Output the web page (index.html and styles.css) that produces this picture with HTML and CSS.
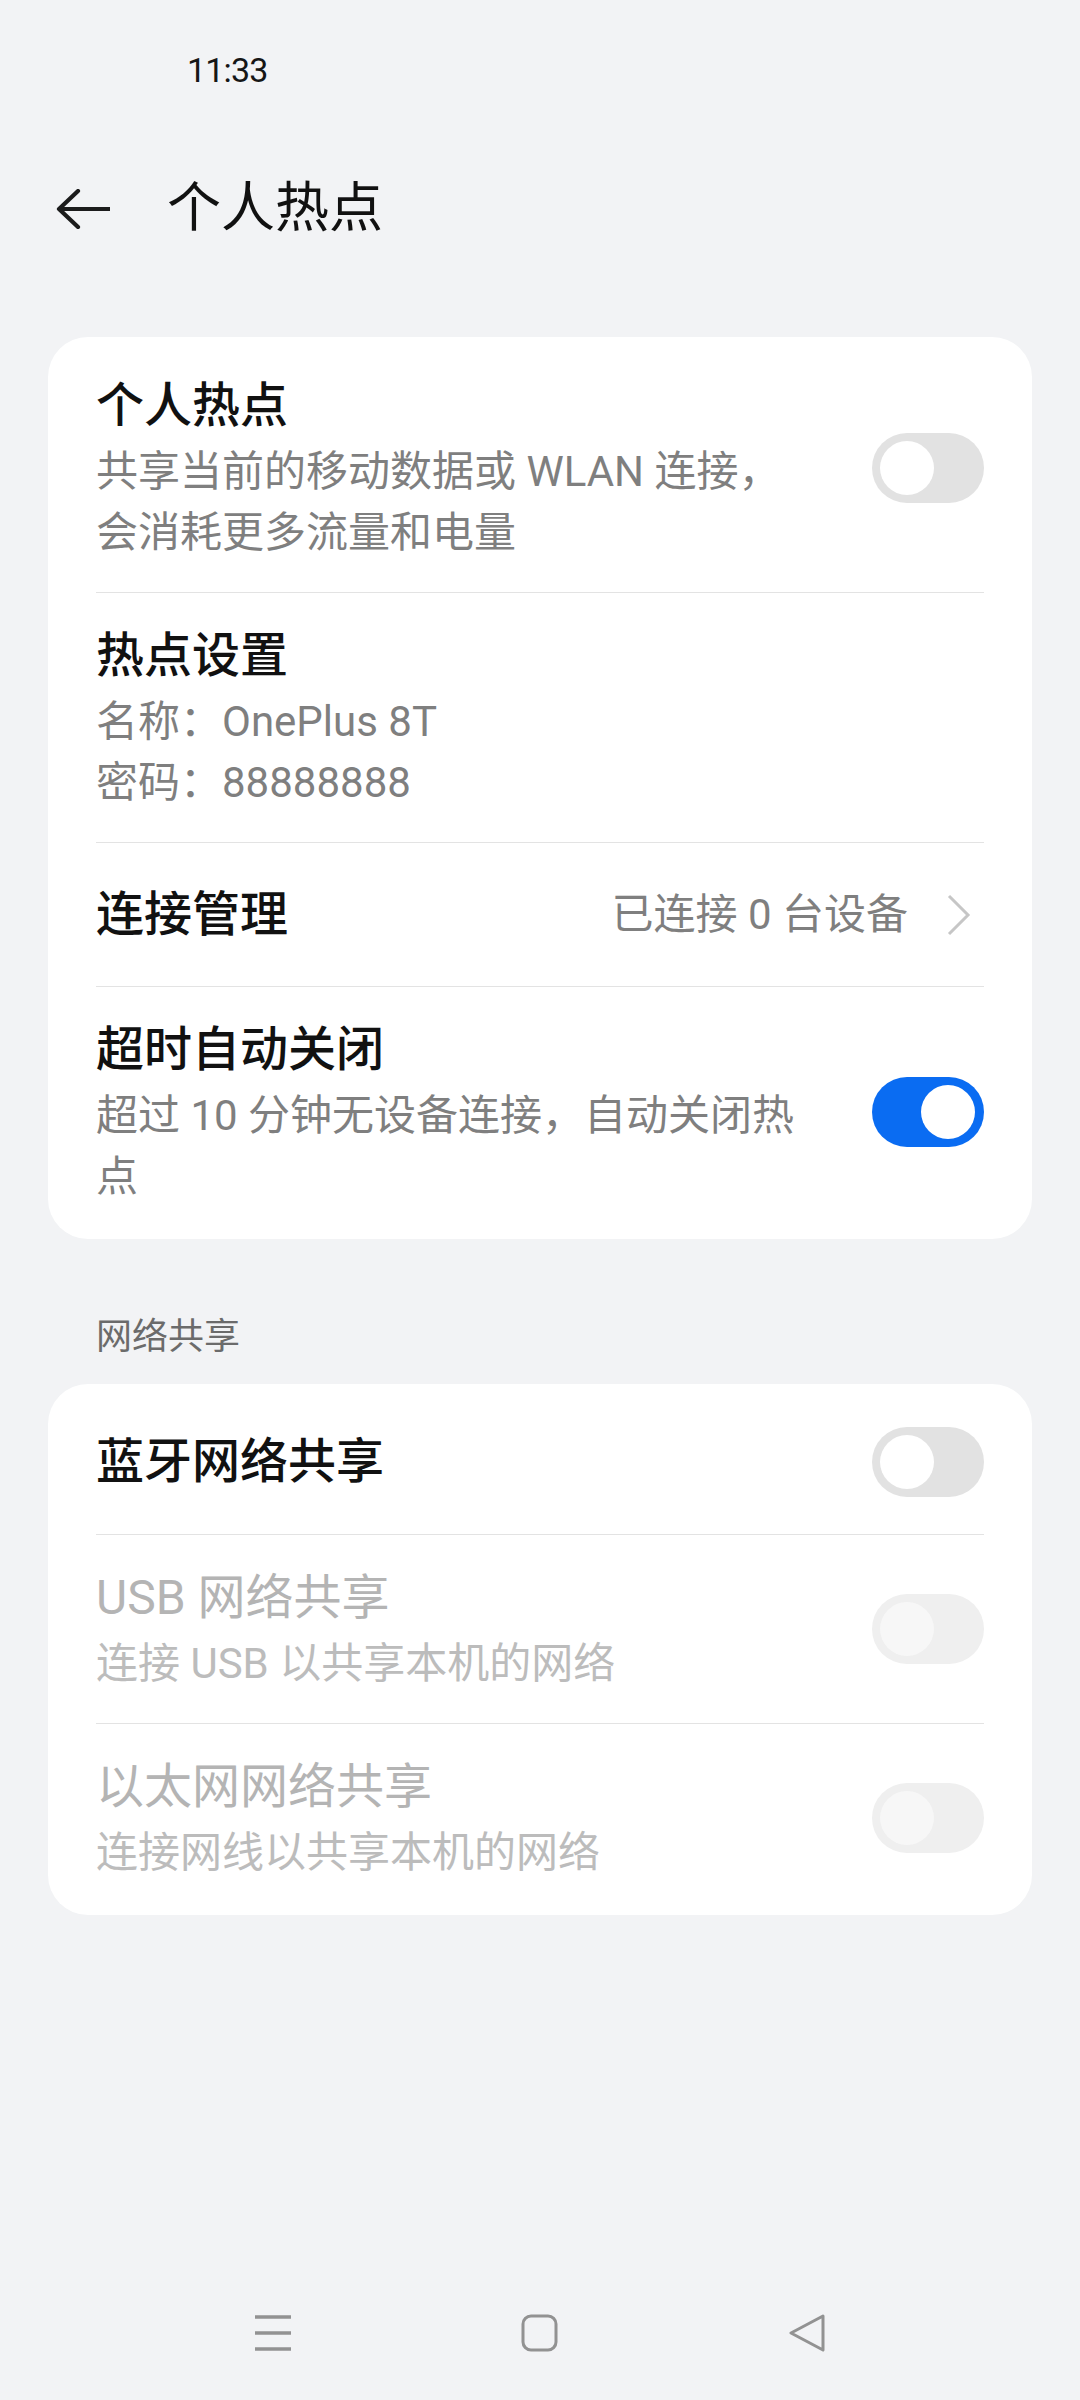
FILE: index.html
```html
<!DOCTYPE html>
<html lang="zh-CN">
<head>
<meta charset="utf-8">
<title>个人热点</title>
<link rel="stylesheet" href="styles.css">
</head>
<body>
<div class="page">
  <div class="statusbar"><span class="time">11:33</span></div>

  <header class="appbar">
    <svg class="back" width="54" height="40" viewBox="0 0 54 40">
      <path d="M3 20 H53 M22 2 L3 20 L22 38" fill="none" stroke="#1c1c1c" stroke-width="4.2" stroke-linecap="round" stroke-linejoin="round"/>
    </svg>
    <h1 class="apptitle">个人热点</h1>
  </header>

  <section class="card card-first">
    <div class="row">
      <div class="text">
        <div class="title">个人热点</div>
        <div class="sub">共享当前的移动数据或 WLAN 连接，会消耗更多流量和电量</div>
      </div>
      <span class="switch"></span>
    </div>
    <div class="row">
      <div class="text">
        <div class="title">热点设置</div>
        <div class="sub">名称：OnePlus 8T</div>
        <div class="sub">密码：88888888</div>
      </div>
    </div>
    <div class="row">
      <div class="text">
        <div class="title">连接管理</div>
      </div>
      <span class="value">已连接 0 台设备</span>
      <svg class="chev" width="26" height="42" viewBox="0 0 26 42">
        <polyline points="3,2 22,21 3,40" fill="none" stroke="#c6c6c6" stroke-width="3"/>
      </svg>
    </div>
    <div class="row">
      <div class="text">
        <div class="title">超时自动关闭</div>
        <div class="sub">超过 10 分钟无设备连接，自动关闭热点</div>
      </div>
      <span class="switch on"></span>
    </div>
  </section>

  <div class="section-label">网络共享</div>

  <section class="card">
    <div class="row">
      <div class="text">
        <div class="title">蓝牙网络共享</div>
      </div>
      <span class="switch"></span>
    </div>
    <div class="row disabled">
      <div class="text">
        <div class="title">USB 网络共享</div>
        <div class="sub">连接 USB 以共享本机的网络</div>
      </div>
      <span class="switch"></span>
    </div>
    <div class="row disabled">
      <div class="text">
        <div class="title">以太网网络共享</div>
        <div class="sub">连接网线以共享本机的网络</div>
      </div>
      <span class="switch"></span>
    </div>
  </section>

  <nav class="navbar">
    <span class="navbtn">
      <svg width="38" height="36" viewBox="0 0 38 36">
        <path d="M1 2 H37 M1 18 H37 M1 34 H37" stroke="#929292" stroke-width="3.6"/>
      </svg>
    </span>
    <span class="navbtn">
      <svg width="38" height="38" viewBox="0 0 38 38">
        <rect x="2" y="2" width="33" height="34" rx="8" ry="8" fill="none" stroke="#929292" stroke-width="3"/>
      </svg>
    </span>
    <span class="navbtn">
      <svg width="38" height="38" viewBox="0 0 38 38">
        <path d="M35 2 L3 19 L35 36 Z" fill="none" stroke="#929292" stroke-width="3" stroke-linejoin="round"/>
      </svg>
    </span>
  </nav>
</div>
</body>
</html>
```

FILE: styles.css
```css
html, body {
  margin: 0;
  padding: 0;
  background: #f2f3f5;
}

body {
  font-family: Roboto, "Noto Sans CJK SC", "Noto Sans", sans-serif;
  color: #111111;
}

.page {
  width: 1080px;
  min-height: 2400px;
  display: flex;
  flex-direction: column;
}

.statusbar {
  box-sizing: border-box;
  height: 140px;
  padding: 50px 0 0 187px;
}

.time {
  font-family: Roboto, sans-serif;
  font-size: 34px;
  line-height: 40px;
  color: #161616;
  letter-spacing: -0.8px;
}

.appbar {
  display: flex;
  align-items: center;
  height: 138px;
  padding-left: 56px;
}

.back {
  flex: none;
  margin-right: 57px;
}

.apptitle {
  margin: 0;
  font-size: 54px;
  line-height: 72px;
  font-weight: 400;
  color: #111111;
}

.card {
  margin: 0 48px;
  background: #ffffff;
  border-radius: 40px;
  padding: 6px 0 3px;
}

.card-first {
  margin-top: 59px;
}

.row {
  box-sizing: border-box;
  min-height: 144px;
  margin: 0 48px;
  padding: 29px 0;
  display: flex;
  align-items: center;
}

.row + .row {
  border-top: 1px solid #e3e3e3;
}

.text {
  flex: 1;
  min-width: 0;
  margin-right: 62px;
}

.title {
  font-size: 48px;
  line-height: 68px;
  font-weight: 500;
  color: #111111;
}

.title + .sub {
  margin-top: 1px;
}

.sub {
  font-size: 42px;
  line-height: 61px;
  color: #7f7f7f;
}

.value {
  font-size: 42px;
  line-height: 60px;
  color: #7f7f7f;
  margin-right: 38px;
}

.chev {
  flex: none;
  margin-right: 12px;
}

.disabled .title {
  color: #b4b4b4;
  font-weight: 400;
}

.disabled .sub {
  color: #bcbcbc;
}

.switch {
  flex: none;
  position: relative;
  width: 112px;
  height: 70px;
  border-radius: 35px;
  background: #e2e2e2;
}

.switch::after {
  content: "";
  position: absolute;
  top: 8px;
  left: 8px;
  width: 54px;
  height: 54px;
  border-radius: 50%;
  background: #ffffff;
}

.switch.on {
  background: #0a6cf2;
}

.switch.on::after {
  left: auto;
  right: 9px;
}

.disabled .switch {
  background: #efefef;
}

.disabled .switch::after {
  background: #f7f7f7;
}

.section-label {
  margin: 74px 0 23px 96px;
  font-size: 36px;
  line-height: 48px;
  color: #6b6b6b;
}

.navbar {
  margin-top: auto;
  height: 134px;
  display: flex;
  justify-content: center;
  align-items: center;
  gap: 207px;
}

.navbtn {
  width: 60px;
  height: 40px;
  display: flex;
  align-items: center;
  justify-content: center;
}
```
